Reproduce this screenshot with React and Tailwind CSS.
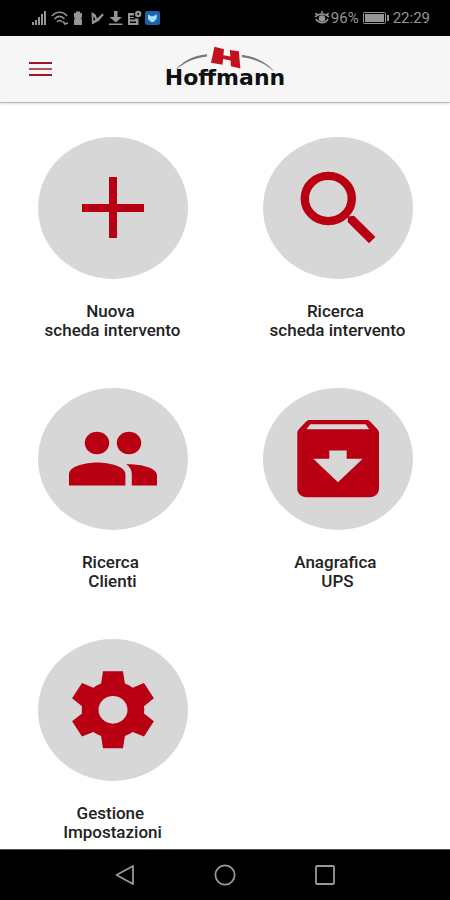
// src/App.jsx
import React from "react";

// Icone disegnate su un ovale 150x142
const PlusIcon = () => (
  <path d="M71 40h8v27h27v8H79v26h-8V75H44v-8h27z" />
);

const SearchIcon = () => (
  <>
    <ellipse cx="65.3" cy="61.5" rx="23.5" ry="22.6" fill="none" stroke="currentColor" strokeWidth="8.4" />
    <path d="M85 79.5l6-.7 21.4 21.3-6.4 6.2L84.7 85z" />
  </>
);

const PeopleIcon = () => (
  <>
    <ellipse cx="59" cy="55" rx="12.2" ry="11.2" />
    <ellipse cx="91" cy="55" rx="12.2" ry="11.2" />
    <path d="M31 97.5V86c0-7.600 16-11.600 28.200-11.600S87.400 78.400 87.400 86v11.500z" />
    <path d="M88.300 76.200C101 75.600 119 79.500 119 87v10.500H93.800V86c0-4-2.200-7.200-5.500-9.800z" />
  </>
);

const ArchiveIcon = () => (
  <path
    fillRule="evenodd"
    d="M47 32h56.500c1.800 0 2.900.6 3.900 1.800l6.800 7.200c1.200 1.300 1.800 2.800 1.800 4.600v55.200c0 4.700-4 8.500-9 8.500H43.300c-5 0-9-3.800-9-8.500V45.600c0-1.800.6-3.300 1.800-4.600l6.800-7.200c1-1.200 2.300-1.800 4.100-1.800zM47.300 36.300l-3.800 5h62.700l-3.500-5zM66.300 62.600v8.200h-16L75 94.300l24.700-23.500h-16v-8.200z"
  />
);

const GearIcon = () => (
  <path
    fillRule="evenodd"
    d="M65 32.300H85L86.900 44.600Q91 46.200 94.700 48.700L106 44 115.900 59.300 106 67.200Q106.500 70.800 106 74.400L115.900 82.300 106 97.600 94.700 92.900Q91 95.400 86.900 97L85 109.300H65L63.100 97Q59 95.400 55.300 92.900L44 97.600 34.100 82.300 44 74.400Q43.500 70.800 44 67.200L34.100 59.300 44 44 55.300 48.700Q59 46.200 63.100 44.600zM75 56.900a14.500 13.900 0 1 0 0 27.800 14.500 13.900 0 1 0 0-27.800z"
  />
);

const tiles = [
  { key: "nuova", label: "Nuova \nscheda intervento", Icon: PlusIcon },
  { key: "ricerca", label: "Ricerca \nscheda intervento", Icon: SearchIcon },
  { key: "clienti", label: "Ricerca \nClienti", Icon: PeopleIcon },
  { key: "ups", label: "Anagrafica \nUPS", Icon: ArchiveIcon },
  { key: "impostazioni", label: "Gestione \nImpostazioni", Icon: GearIcon },
];

function StatusBar() {
  return (
    <div className="flex h-9 items-center justify-between bg-black pr-5 pl-8 text-[#969696]">
      {/* Notifiche */}
      <svg width="130" height="18" viewBox="0 0 130 18" fill="currentColor" aria-hidden="true">
        <path d="M0 13h2v3H0zM3 11h2v5H3zM6 8h2v8H6zM9 5h2v11H9zM12 2h2v14h-2z" />
        <g fill="none" stroke="currentColor" strokeWidth="1.600">
          <path d="M20 7c4-5 11-5 15 0M22.500 10c3-3.500 7-3.500 10 0M25 13c1.500-2 3.500-2 5 0" />
          <path d="M31 12.500l2 2.500 3-1" />
        </g>
        <path d="M44 2.500h4V4h2v4l-1 1.500 1 1.500v5h-8v-5l1-1.500L42 8V4h2z" />
        <path fillRule="evenodd" d="M59.500 3l4 2.500 1.500 4 5.500-5 1.300 1.400-5.300 6.100L60 15.500zM61.500 7v5l2-1.500z" />
        <path d="M82 2h3.500v6H90l-6.200 5.500L77.500 8H82zM77 14.500h13.500V16H77z" />
        <path fillRule="evenodd" d="M96 4h6v2.500h-4V8h4v1h-4v1.500h5V9.500h3.500V16H96zM98 12.500V14h6v-1.500zM103 5a3.200 3.200 0 1 0 6.400 0A3.200 3.200 0 1 0 103 5zm2.200 0a1 1 0 1 0 2 0 1 1 0 1 0-2 0z" />
        <rect x="113" y="2" width="15" height="14" rx="2.500" fill="#1c62ad" />
        <path d="M116 5.500l4 2 5-2-.5 4.500-3 3h-2.500l-3-3z" fill="#a5dff5" />
      </svg>

      <div className="flex items-center text-[15px] leading-5">
        <svg width="16" height="14" viewBox="0 0 16 14" fill="none" stroke="currentColor" strokeWidth="1.500" aria-hidden="true">
          <path d="M1 6c4-4 10-4 14 0M2 8c3 5 9 5 12 0M3 4L1.500 2M8 3V0M13 4l1.500-2" />
          <circle cx="8" cy="7.500" r="2.500" fill="currentColor" />
        </svg>
        <span className="ml-px">96%</span>
        <svg className="mx-1" width="26" height="12" viewBox="0 0 26 12" fill="currentColor" aria-hidden="true">
          <rect x=".5" y=".5" width="22" height="11" rx="1" fill="none" stroke="currentColor" />
          <rect x="2" y="2" width="19" height="8" />
          <rect x="24" y="3" width="2" height="6" />
        </svg>
        <span>22:29</span>
      </div>
    </div>
  );
}

function Logo() {
  return (
    <div className="flex flex-col items-center pb-1">
      <svg width="124" height="28" viewBox="0 0 124 28" aria-hidden="true">
        <path d="M12 24.500C19 15.500 30 9.500 44 8.200v2.300C31 12 21 16.500 12 24.500z" fill="#777" />
        <path d="M79 8.800c15 2.200 26 8.200 32.500 17.200C102 17.500 93 13 79 11.200z" fill="#777" />
        <path d="M51.500.7L61 3.200l-.6 6 7 1.300-.6-6.500 9 1.200 1.600 17.200-9.500-2.200-.3-5.700-7.500-1.400-.6 5.700L48 16.800z" fill="#c4101f" />
      </svg>
      <span className="-mt-1.5 font-['DejaVu_Sans',sans-serif] text-[22px] leading-5 font-bold text-[#111]">
        Hoffmann
      </span>
    </div>
  );
}

function Header() {
  return (
    <header className="grid h-[67px] grid-cols-[1fr_auto_1fr] items-center border-b border-[#bbb] bg-[#f6f6f6] shadow-sm">
      <div className="pl-7">
        <button type="button" aria-label="Menu" className="flex flex-col gap-1 p-px">
          <span className="h-0.5 w-[23px] bg-[#9d1722]" />
          <span className="h-0.5 w-[23px] bg-[#b25562]" />
          <span className="h-0.5 w-[23px] bg-[#9d1722]" />
        </button>
      </div>
      <Logo />
    </header>
  );
}

function Tile({ label, Icon }) {
  return (
    <button type="button" className="flex flex-col items-center">
      <svg viewBox="0 0 150 142" className="h-auto w-2/3 max-w-60 overflow-visible text-[#b90013]" fill="currentColor" aria-hidden="true">
        <ellipse cx="75" cy="71" rx="75" ry="71" fill="#d7d7d7" />
        <Icon />
      </svg>
      <span className="mt-[23px] text-center text-[17px] leading-[19px] font-medium whitespace-pre">
        {label}
      </span>
    </button>
  );
}

function NavBar() {
  return (
    <nav className="flex h-[51px] items-center justify-center gap-[76px] border-t border-[#555] bg-black text-[#999]">
      <button type="button" aria-label="Indietro">
        <svg width="24" height="24" viewBox="0 0 24 24" fill="none" stroke="currentColor" strokeWidth="1.800" strokeLinejoin="round">
          <path d="M3.500 12L20 3v18z" />
        </svg>
      </button>
      <button type="button" aria-label="Home">
        <svg width="24" height="24" viewBox="0 0 24 24" fill="none" stroke="currentColor" strokeWidth="1.800">
          <circle cx="12" cy="12" r="9.600" />
        </svg>
      </button>
      <button type="button" aria-label="Recenti">
        <svg width="24" height="24" viewBox="0 0 24 24" fill="none" stroke="currentColor" strokeWidth="1.800">
          <rect x="3" y="3" width="18" height="18" rx="1" />
        </svg>
      </button>
    </nav>
  );
}

export default function App() {
  return (
    <div className="flex min-h-screen flex-col bg-white font-[Roboto,sans-serif] text-[#222]">
      <StatusBar />
      <Header />
      <main className="grid flex-1 grid-cols-2 content-start gap-y-12 pt-[34px]">
        {tiles.map((t) => (
          <Tile key={t.key} label={t.label} Icon={t.Icon} />
        ))}
      </main>
      <NavBar />
    </div>
  );
}
